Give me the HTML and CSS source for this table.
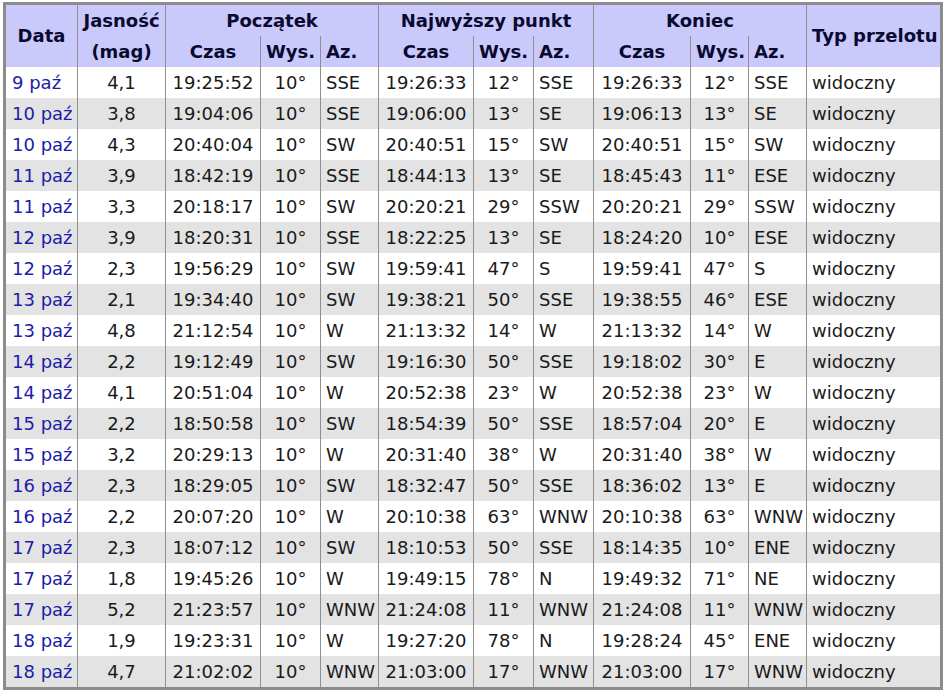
FILE: index.html
```html
<!DOCTYPE html>
<html lang="pl">
<head>
<meta charset="utf-8">
<title>Przeloty</title>
<link rel="stylesheet" href="styles.css">
</head>
<body>
<table class="passes">
  <colgroup>
    <col class="c-date"><col class="c-mag">
    <col class="c-time"><col class="c-alt"><col class="c-az">
    <col class="c-time"><col class="c-alt"><col class="c-az2">
    <col class="c-time3"><col class="c-alt3"><col class="c-az">
    <col class="c-type">
  </colgroup>
  <thead>
    <tr>
      <th rowspan="2" class="first">Data</th>
      <th>Jasność</th>
      <th colspan="3">Początek</th>
      <th colspan="3">Najwyższy punkt</th>
      <th colspan="3">Koniec</th>
      <th rowspan="2" class="left">Typ przelotu</th>
    </tr>
    <tr>
      <th>(mag)</th>
      <th>Czas</th><th>Wys.</th><th class="left">Az.</th>
      <th>Czas</th><th>Wys.</th><th class="left">Az.</th>
      <th>Czas</th><th>Wys.</th><th class="left">Az.</th>
    </tr>
  </thead>
  <tbody>
    <tr><td class="first"><a href="#">9 paź</a></td><td class="ctr">4,1</td><td class="ctr">19:25:52</td><td class="ctr">10°</td><td>SSE</td><td class="ctr">19:26:33</td><td class="ctr">12°</td><td>SSE</td><td class="ctr">19:26:33</td><td class="ctr">12°</td><td>SSE</td><td>widoczny</td></tr>
    <tr><td class="first"><a href="#">10 paź</a></td><td class="ctr">3,8</td><td class="ctr">19:04:06</td><td class="ctr">10°</td><td>SSE</td><td class="ctr">19:06:00</td><td class="ctr">13°</td><td>SE</td><td class="ctr">19:06:13</td><td class="ctr">13°</td><td>SE</td><td>widoczny</td></tr>
    <tr><td class="first"><a href="#">10 paź</a></td><td class="ctr">4,3</td><td class="ctr">20:40:04</td><td class="ctr">10°</td><td>SW</td><td class="ctr">20:40:51</td><td class="ctr">15°</td><td>SW</td><td class="ctr">20:40:51</td><td class="ctr">15°</td><td>SW</td><td>widoczny</td></tr>
    <tr><td class="first"><a href="#">11 paź</a></td><td class="ctr">3,9</td><td class="ctr">18:42:19</td><td class="ctr">10°</td><td>SSE</td><td class="ctr">18:44:13</td><td class="ctr">13°</td><td>SE</td><td class="ctr">18:45:43</td><td class="ctr">11°</td><td>ESE</td><td>widoczny</td></tr>
    <tr><td class="first"><a href="#">11 paź</a></td><td class="ctr">3,3</td><td class="ctr">20:18:17</td><td class="ctr">10°</td><td>SW</td><td class="ctr">20:20:21</td><td class="ctr">29°</td><td>SSW</td><td class="ctr">20:20:21</td><td class="ctr">29°</td><td>SSW</td><td>widoczny</td></tr>
    <tr><td class="first"><a href="#">12 paź</a></td><td class="ctr">3,9</td><td class="ctr">18:20:31</td><td class="ctr">10°</td><td>SSE</td><td class="ctr">18:22:25</td><td class="ctr">13°</td><td>SE</td><td class="ctr">18:24:20</td><td class="ctr">10°</td><td>ESE</td><td>widoczny</td></tr>
    <tr><td class="first"><a href="#">12 paź</a></td><td class="ctr">2,3</td><td class="ctr">19:56:29</td><td class="ctr">10°</td><td>SW</td><td class="ctr">19:59:41</td><td class="ctr">47°</td><td>S</td><td class="ctr">19:59:41</td><td class="ctr">47°</td><td>S</td><td>widoczny</td></tr>
    <tr><td class="first"><a href="#">13 paź</a></td><td class="ctr">2,1</td><td class="ctr">19:34:40</td><td class="ctr">10°</td><td>SW</td><td class="ctr">19:38:21</td><td class="ctr">50°</td><td>SSE</td><td class="ctr">19:38:55</td><td class="ctr">46°</td><td>ESE</td><td>widoczny</td></tr>
    <tr><td class="first"><a href="#">13 paź</a></td><td class="ctr">4,8</td><td class="ctr">21:12:54</td><td class="ctr">10°</td><td>W</td><td class="ctr">21:13:32</td><td class="ctr">14°</td><td>W</td><td class="ctr">21:13:32</td><td class="ctr">14°</td><td>W</td><td>widoczny</td></tr>
    <tr><td class="first"><a href="#">14 paź</a></td><td class="ctr">2,2</td><td class="ctr">19:12:49</td><td class="ctr">10°</td><td>SW</td><td class="ctr">19:16:30</td><td class="ctr">50°</td><td>SSE</td><td class="ctr">19:18:02</td><td class="ctr">30°</td><td>E</td><td>widoczny</td></tr>
    <tr><td class="first"><a href="#">14 paź</a></td><td class="ctr">4,1</td><td class="ctr">20:51:04</td><td class="ctr">10°</td><td>W</td><td class="ctr">20:52:38</td><td class="ctr">23°</td><td>W</td><td class="ctr">20:52:38</td><td class="ctr">23°</td><td>W</td><td>widoczny</td></tr>
    <tr><td class="first"><a href="#">15 paź</a></td><td class="ctr">2,2</td><td class="ctr">18:50:58</td><td class="ctr">10°</td><td>SW</td><td class="ctr">18:54:39</td><td class="ctr">50°</td><td>SSE</td><td class="ctr">18:57:04</td><td class="ctr">20°</td><td>E</td><td>widoczny</td></tr>
    <tr><td class="first"><a href="#">15 paź</a></td><td class="ctr">3,2</td><td class="ctr">20:29:13</td><td class="ctr">10°</td><td>W</td><td class="ctr">20:31:40</td><td class="ctr">38°</td><td>W</td><td class="ctr">20:31:40</td><td class="ctr">38°</td><td>W</td><td>widoczny</td></tr>
    <tr><td class="first"><a href="#">16 paź</a></td><td class="ctr">2,3</td><td class="ctr">18:29:05</td><td class="ctr">10°</td><td>SW</td><td class="ctr">18:32:47</td><td class="ctr">50°</td><td>SSE</td><td class="ctr">18:36:02</td><td class="ctr">13°</td><td>E</td><td>widoczny</td></tr>
    <tr><td class="first"><a href="#">16 paź</a></td><td class="ctr">2,2</td><td class="ctr">20:07:20</td><td class="ctr">10°</td><td>W</td><td class="ctr">20:10:38</td><td class="ctr">63°</td><td>WNW</td><td class="ctr">20:10:38</td><td class="ctr">63°</td><td>WNW</td><td>widoczny</td></tr>
    <tr><td class="first"><a href="#">17 paź</a></td><td class="ctr">2,3</td><td class="ctr">18:07:12</td><td class="ctr">10°</td><td>SW</td><td class="ctr">18:10:53</td><td class="ctr">50°</td><td>SSE</td><td class="ctr">18:14:35</td><td class="ctr">10°</td><td>ENE</td><td>widoczny</td></tr>
    <tr><td class="first"><a href="#">17 paź</a></td><td class="ctr">1,8</td><td class="ctr">19:45:26</td><td class="ctr">10°</td><td>W</td><td class="ctr">19:49:15</td><td class="ctr">78°</td><td>N</td><td class="ctr">19:49:32</td><td class="ctr">71°</td><td>NE</td><td>widoczny</td></tr>
    <tr><td class="first"><a href="#">17 paź</a></td><td class="ctr">5,2</td><td class="ctr">21:23:57</td><td class="ctr">10°</td><td>WNW</td><td class="ctr">21:24:08</td><td class="ctr">11°</td><td>WNW</td><td class="ctr">21:24:08</td><td class="ctr">11°</td><td>WNW</td><td>widoczny</td></tr>
    <tr><td class="first"><a href="#">18 paź</a></td><td class="ctr">1,9</td><td class="ctr">19:23:31</td><td class="ctr">10°</td><td>W</td><td class="ctr">19:27:20</td><td class="ctr">78°</td><td>N</td><td class="ctr">19:28:24</td><td class="ctr">45°</td><td>ENE</td><td>widoczny</td></tr>
    <tr><td class="first"><a href="#">18 paź</a></td><td class="ctr">4,7</td><td class="ctr">21:02:02</td><td class="ctr">10°</td><td>WNW</td><td class="ctr">21:03:00</td><td class="ctr">17°</td><td>WNW</td><td class="ctr">21:03:00</td><td class="ctr">17°</td><td>WNW</td><td>widoczny</td></tr>
  </tbody>
</table>
</body>
</html>
```
FILE: styles.css
```css
html, body {
  margin: 0;
  padding: 0;
  background: #ffffff;
}

body {
  padding: 2px 0 0 3px;
  font-family: "DejaVu Sans", Verdana, sans-serif;
  font-size: 18px;
  color: #1a1a1a;
}

.passes {
  table-layout: fixed;
  width: 940px;
  border: 3px solid #8c8c8c;
  border-collapse: separate;
  border-spacing: 0;
}

.c-date { width: 71px; }
.c-mag { width: 88px; }
.c-time { width: 95px; }
.c-alt { width: 60px; }
.c-az { width: 58px; }
.c-az2 { width: 60px; }
.c-time3 { width: 97px; }
.c-alt3 { width: 58px; }
.c-type { width: 134px; }

.passes th,
.passes td {
  border-left: 1px solid #8f8f8f;
  padding: 0 5px;
  white-space: nowrap;
  overflow: hidden;
}

.passes .first {
  border-left: none;
}

.passes th {
  background: #c9c9fb;
  color: #0a0a30;
  font-weight: bold;
  text-align: center;
  height: 31px;
  line-height: 22px;
}

.passes th.left {
  text-align: left;
}

.passes td {
  height: 31px;
  line-height: 22px;
  text-align: left;
}

.passes td.first {
  padding-left: 6px;
}

.passes td.ctr {
  text-align: center;
}

.passes tbody tr:nth-child(even) td {
  background: #e3e3e3;
}

.passes a {
  color: #1c1caa;
  text-decoration: none;
}
```
